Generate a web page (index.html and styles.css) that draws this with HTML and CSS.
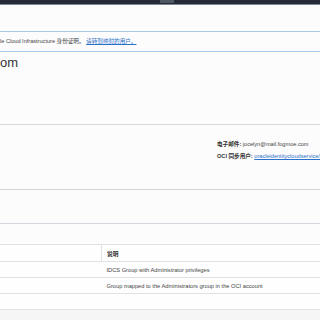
FILE: index.html
```html
<!DOCTYPE html>
<html lang="zh-CN">

<head>
    <meta charset="UTF-8">
    <meta name="viewport" content="width=device-width, initial-scale=1.0">
    <title>用户详细信息</title>
    <link rel="stylesheet" href="styles.css">
</head>

<body>

    <div class="topbar">
        <span class="topbar-tab"></span>
    </div>

    <div class="banner">
        le Cloud Infrastructure 身份证明。 <a href="#">请转到映射的用户。</a>
    </div>

    <h1 class="title">om</h1>

    <div class="rule"></div>

    <div class="details">
        <p><b>电子邮件:</b> jocelyn@mail.fogmoe.com</p>
        <p><b>OCI 同步用户:</b> <a href="#">oracleidentitycloudservice/jocelyn@mail.fogmoe.com</a></p>
    </div>

    <div class="rule rule-low"></div>
    <div class="rule rule-tabs"></div>

    <table class="groups">
        <thead>
            <tr>
                <th class="col-name"></th>
                <th>说明</th>
            </tr>
        </thead>
        <tbody>
            <tr>
                <td class="col-name"></td>
                <td>IDCS Group with Administrator privileges</td>
            </tr>
            <tr>
                <td class="col-name"></td>
                <td>Group mapped to the Administrators group in the OCI account</td>
            </tr>
            <tr>
                <td class="col-name"></td>
                <td></td>
            </tr>
        </tbody>
    </table>

    <div class="footer-fill"></div>

</body>

</html>
```

FILE: styles.css
```css
body {
    margin: 0;
    padding: 0;
    background-color: #fcfcfc;
    font-family: "Liberation Sans", "Noto Sans CJK SC", sans-serif;
    color: #3a3a3a;
    overflow: hidden;
    height: 320px;
}

a {
    color: #2a6fc9;
    text-decoration: underline;
}

.topbar {
    height: 4px;
    background-color: #242b36;
    border-bottom: 1px solid #7e8692;
    display: flex;
}

.topbar-tab {
    margin-left: 160px;
    width: 14px;
    height: 3px;
    background-color: #4f5764;
}

.banner {
    margin-top: 26px;
    height: 19px;
    line-height: 19px;
    border-top: 1px solid #a6cbea;
    border-bottom: 1px solid #a6cbea;
    font-size: 5.6px;
    white-space: nowrap;
    color: #444;
}

.title {
    margin: 3px 0 0 0;
    font-size: 13px;
    line-height: 16px;
    font-weight: normal;
    color: #333;
}

.rule {
    height: 1px;
    background-color: #d9d9d9;
    margin-top: 53px;
}

.details {
    padding: 13px 0 0 217px;
    font-size: 5.6px;
    line-height: 12px;
    white-space: nowrap;
    overflow: hidden;
    color: #444;
}

.details p {
    margin: 0;
}

.details b {
    color: #333;
}

.rule-low {
    margin-top: 27px;
    background-color: #d6d6d6;
}

.rule-tabs {
    margin-top: 33px;
    background-color: #d3d7de;
}

.groups {
    margin-top: 20px;
    width: 100%;
    border-collapse: collapse;
    font-size: 5.7px;
    color: #444;
    background-color: #fefefe;
}

.groups th,
.groups td {
    height: 15px;
    padding: 0 0 0 5px;
    text-align: left;
    border-top: 1px solid #e2e2e2;
    border-bottom: 1px solid #e2e2e2;
    white-space: nowrap;
}

.groups th {
    height: 16px;
    font-weight: bold;
    color: #333;
}

.groups .col-name {
    width: 96px;
}

.groups th.col-name {
    border-right: 1px solid #e2e2e2;
}

.footer-fill {
    height: 20px;
    background-color: #f6f6f6;
}
```
